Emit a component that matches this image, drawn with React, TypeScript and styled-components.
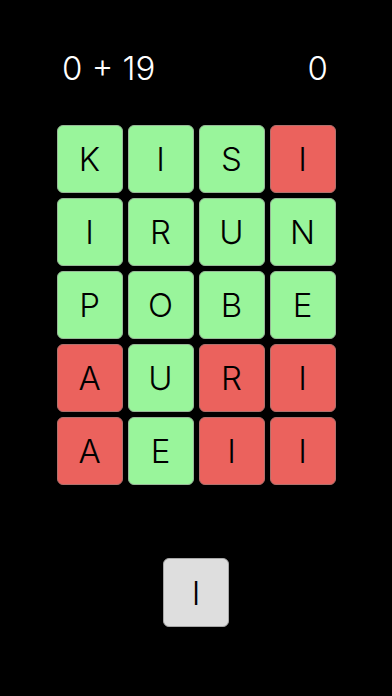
import React from "react";
import styled, { createGlobalStyle } from "styled-components";

const GlobalStyle = createGlobalStyle`
  html, body {
    margin: 0;
    padding: 0;
    background: #000000;
  }
  #root {
    min-height: 696px;
  }
`;

const Screen = styled.div`
  width: 392px;
  height: 696px;
  background: #000000;
  display: flex;
  flex-direction: column;
  align-items: center;
  font-family: Inter, "Liberation Sans", sans-serif;
`;

const ScoreBar = styled.div`
  box-sizing: border-box;
  width: 100%;
  display: flex;
  justify-content: space-between;
  padding: 50px 64px 0 62px;
  font-size: 33px;
  font-weight: 300;
  line-height: 36px;
  color: #ffffff;
`;

const Board = styled.div`
  margin-top: 39px;
  display: grid;
  grid-template-columns: repeat(4, 66px);
  grid-auto-rows: 68px;
  column-gap: 5px;
  row-gap: 5px;
`;

const Tile = styled.div<{ $wrong?: boolean }>`
  box-sizing: border-box;
  display: flex;
  align-items: center;
  justify-content: center;
  border-radius: 6px;
  border: 1px solid ${(p) => (p.$wrong ? "#b0706c" : "#98b898")};
  background: ${(p) => (p.$wrong ? "#eb625d" : "#99f59b")};
  color: #000000;
  font-size: 33px;
  font-weight: 300;
`;

const KeyRow = styled.div`
  margin-top: 73px;
  display: flex;
  justify-content: center;
`;

const Key = styled.button`
  all: unset;
  box-sizing: border-box;
  width: 66px;
  height: 69px;
  display: flex;
  align-items: center;
  justify-content: center;
  border-radius: 6px;
  border: 1px solid #a8a8a8;
  background: #dedede;
  color: #000000;
  font-family: Inter, "Liberation Sans", sans-serif;
  font-size: 33px;
  font-weight: 300;
`;

const rows: [string, boolean][][] = [
  [["K", false], ["I", false], ["S", false], ["I", true]],
  [["I", false], ["R", false], ["U", false], ["N", false]],
  [["P", false], ["O", false], ["B", false], ["E", false]],
  [["A", true], ["U", false], ["R", true], ["I", true]],
  [["A", true], ["E", false], ["I", true], ["I", true]],
];

export default function App() {
  return (
    <>
      <GlobalStyle />
      <Screen>
        <ScoreBar>
          <span>0 + 19</span>
          <span>0</span>
        </ScoreBar>
        <Board>
          {rows.flat().map(([letter, wrong], i) => (
            <Tile key={i} $wrong={wrong}>
              {letter}
            </Tile>
          ))}
        </Board>
        <KeyRow>
          <Key>I</Key>
        </KeyRow>
      </Screen>
    </>
  );
}
